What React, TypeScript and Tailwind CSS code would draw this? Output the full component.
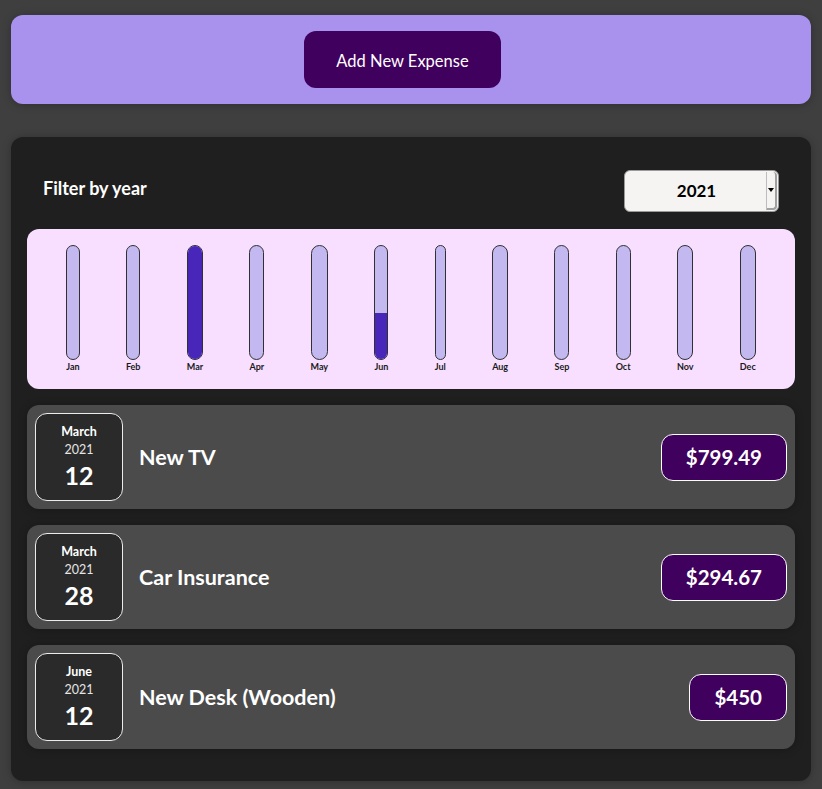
import React from "react";

const months = [
  ["Jan", 0],
  ["Feb", 0],
  ["Mar", 1094.16],
  ["Apr", 0],
  ["May", 0],
  ["Jun", 450],
  ["Jul", 0],
  ["Aug", 0],
  ["Sep", 0],
  ["Oct", 0],
  ["Nov", 0],
  ["Dec", 0],
] as const;
const max = 1094.16;

const expenses = [
  { month: "March", year: "2021", day: "12", title: "New TV", price: "$799.49" },
  { month: "March", year: "2021", day: "28", title: "Car Insurance", price: "$294.67" },
  { month: "June", year: "2021", day: "12", title: "New Desk (Wooden)", price: "$450" },
];

export default function App() {
  return (
    <div
      className="min-h-screen bg-[#3f3f3f] px-[11px] pt-[15px] pb-[9px]"
      style={{ fontFamily: "Lato, 'Noto Sans', sans-serif" }}
    >
      <div className="flex h-[89px] items-center justify-center rounded-xl bg-[#a892ee] shadow-[0_1px_8px_rgba(0,0,0,0.25)]">
        <div className="mr-[17px] flex h-[57px] w-[197px] items-center justify-center rounded-xl bg-[#40005d] pt-[3px] text-[16.5px] text-white">
          Add New Expense
        </div>
      </div>

      <div className="mt-[33px] rounded-xl bg-[#1f1f1f] px-4 pt-4 pb-8 shadow-[0_1px_8px_rgba(0,0,0,0.25)]">
        <div className="mt-[17px] mb-[17px] flex items-center justify-between px-4 text-white">
          <div className="pb-[5px] text-[18px] font-bold">Filter by year</div>
          <div className="relative flex h-[42px] w-[155px] items-center justify-center rounded-[6px] border border-[#9a9a9a] bg-[#f5f4f2] text-[17px] font-bold text-black">
            <span className="pr-[10px]">2021</span>
            <div className="absolute right-[1px] top-[1px] bottom-[1px] flex w-[11px] items-center justify-center rounded-r-[4px] border-l border-[#bdbdbd] border-r-2 border-b-2 border-r-[#a0a0a0] border-b-[#a0a0a0]">
              <div className="h-0 w-0 border-l-[3px] border-r-[3px] border-t-[4px] border-l-transparent border-r-transparent border-t-black" />
            </div>
          </div>
        </div>

        <div className="flex h-[160px] justify-around rounded-xl bg-[#f8dfff] p-4">
          {months.map(([m, v]) => (
            <div key={m} className="flex h-full flex-col items-center">
              <div className="relative w-full flex-1 overflow-hidden rounded-xl border border-[#313131] bg-[#c3b9f0]">
                <div
                  className="absolute bottom-0 left-0 w-full bg-[#4826b9]"
                  style={{ height: `${Math.round((v / max) * 100)}%` }}
                />
              </div>
              <div className="pt-[1px] text-[9px] font-bold leading-[12px] text-[#1a1a1a]">{m}</div>
            </div>
          ))}
        </div>

        <div className="mt-4 flex flex-col gap-4">
          {expenses.map((e) => (
            <div
              key={e.title}
              className="flex items-center justify-between rounded-xl bg-[#4b4b4b] p-2 shadow-[0_1px_8px_rgba(0,0,0,0.25)]"
            >
              <div className="flex h-[88px] w-[88px] shrink-0 flex-col items-center justify-center rounded-xl border border-[#ececec] bg-[#2a2a2a] text-white">
                <div className="text-[12.5px] font-bold leading-[18px]">{e.month}</div>
                <div className="text-[12.5px] leading-[18px] text-[#e5e5e5]">{e.year}</div>
                <div className="text-[25px] font-bold leading-[32px]">{e.day}</div>
              </div>
              <div className="mx-4 flex-1 text-[21.5px] font-bold text-white">{e.title}</div>
              <div className="rounded-xl border border-white bg-[#40005d] px-6 py-2 text-[20.5px] font-bold leading-[29px] text-white">
                {e.price}
              </div>
            </div>
          ))}
        </div>
      </div>
    </div>
  );
}
